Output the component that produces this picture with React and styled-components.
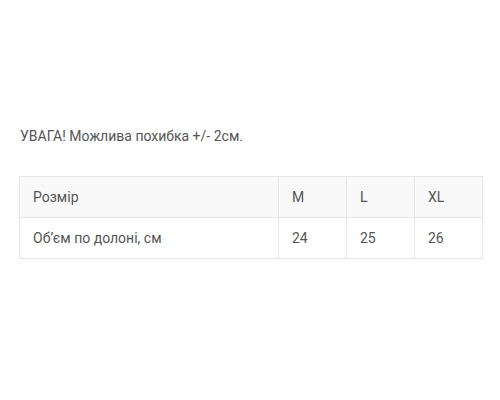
import React from 'react';
import styled, { createGlobalStyle } from 'styled-components';

const sizes = [
  { name: 'M', value: 24 },
  { name: 'L', value: 25 },
  { name: 'XL', value: 26 }
];

export default function App() {
  return (
    <Page>
      <GlobalStyle />
      <Note>УВАГА! Можлива похибка +/- 2см.</Note>
      <SizeTable>
        <tbody>
          <HeadRow>
            <Cell>Розмір</Cell>
            {sizes.map(s => (
              <Cell key={s.name} narrow>
                {s.name}
              </Cell>
            ))}
          </HeadRow>
          <tr>
            <Cell>Об’єм по долоні, см</Cell>
            {sizes.map(s => (
              <Cell key={s.name} narrow>
                {s.value}
              </Cell>
            ))}
          </tr>
        </tbody>
      </SizeTable>
    </Page>
  );
}

const GlobalStyle = createGlobalStyle`
  body {
    margin: 0;
    background: #fff;
    font-family: Roboto, "Liberation Sans", sans-serif;
  }
`;

const Page = styled.div`
  width: 500px;
  height: 400px;
  padding: 126px 18px 0 19px;
  box-sizing: border-box;
  color: #555;
`;

const Note = styled.p`
  margin: 0 0 30px 1px;
  font-size: 14px;
  line-height: 20px;
`;

const SizeTable = styled.table`
  width: 464px;
  border-collapse: collapse;
  font-size: 14px;
  line-height: 20px;
`;

const HeadRow = styled.tr`
  background: #f9f9f9;
`;

const Cell = styled.td`
  border: 1px solid #e6e6e6;
  padding: 10px 13px 10px 13px;
  height: 41px;
  box-sizing: border-box;
  text-align: left;
  width: ${p => (p.narrow ? '68px' : 'auto')};
`;
